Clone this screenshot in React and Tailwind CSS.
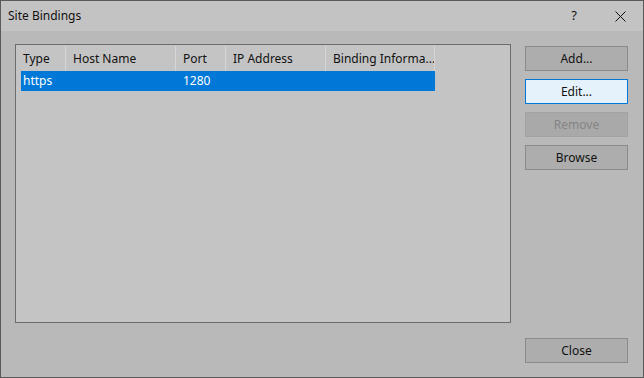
export default function App() {
  const cols = [
    { label: "Type", w: "w-[45px]", pad: "pl-[2px]" },
    { label: "Host Name", w: "w-[110px]", pad: "pl-[7px]" },
    { label: "Port", w: "w-[50px]", pad: "pl-[7px]" },
    { label: "IP Address", w: "w-[100px]", pad: "pl-[7px]" },
    { label: "Binding Informa...", w: "w-[109px]", pad: "pl-[7px]" },
  ]
  const row = ["https", "", "1280", "", ""]

  const btn = "w-[103px] h-[25px] flex items-center justify-center border text-[12px]"

  return (
    <div className="w-[644px] h-[378px] border border-[#5a5a5a] flex flex-col bg-[#b9b9b9] text-[#111] font-['Noto_Sans','Open_Sans',sans-serif] overflow-hidden">
      {/* Title bar */}
      <div className="h-[30px] bg-[#c3c3c3] flex items-center shrink-0">
        <span className="pl-[7px] text-[12px]">Site Bindings</span>
        <span className="ml-auto text-[13px] mr-[38px]">?</span>
        <svg width="11" height="11" viewBox="0 0 11 11" className="mr-[17px]">
          <path d="M0.5 0.5 L10.5 10.5 M10.5 0.5 L0.5 10.5" stroke="#111" strokeWidth="1" />
        </svg>
      </div>

      {/* Body */}
      <div className="flex-1 flex flex-col pl-[14px] pt-[13px]">
        <div className="flex">
          <div className="w-[496px] h-[279px] border border-[#6b6b70] bg-[#c4c4c4] pl-[5px] pt-[1px]">
            <div className="flex h-[25px] text-[12px]">
              {cols.map(c => (
                <div key={c.label} className={`${c.w} ${c.pad} border-r border-[#d6d6d6] flex items-center whitespace-nowrap overflow-hidden`}>
                  {c.label}
                </div>
              ))}
            </div>
            <div className="flex h-[20px] w-[414px] bg-[#0078d7] text-white text-[12px]">
              {cols.map((c, i) => (
                <div key={c.label} className={`${c.w} ${c.pad} flex items-center`}>
                  {row[i]}
                </div>
              ))}
            </div>
          </div>

          <div className="ml-[14px] mt-[2px] flex flex-col gap-[8px]">
            <div className={`${btn} bg-[#adadad] border-[#8a8a8a]`}>Add...</div>
            <div className={`${btn} bg-[#e5f1fb] border-[#0078d7]`}>Edit...</div>
            <div className={`${btn} bg-[#a9a9a9] border-[#a2a2a2] text-[#858585]`}>Remove</div>
            <div className={`${btn} bg-[#adadad] border-[#8a8a8a]`}>Browse</div>
          </div>
        </div>

        <div className="flex justify-end mt-[15px] pr-[15px]">
          <div className={`${btn} bg-[#adadad] border-[#8a8a8a]`}>Close</div>
        </div>
      </div>
    </div>
  )
}
